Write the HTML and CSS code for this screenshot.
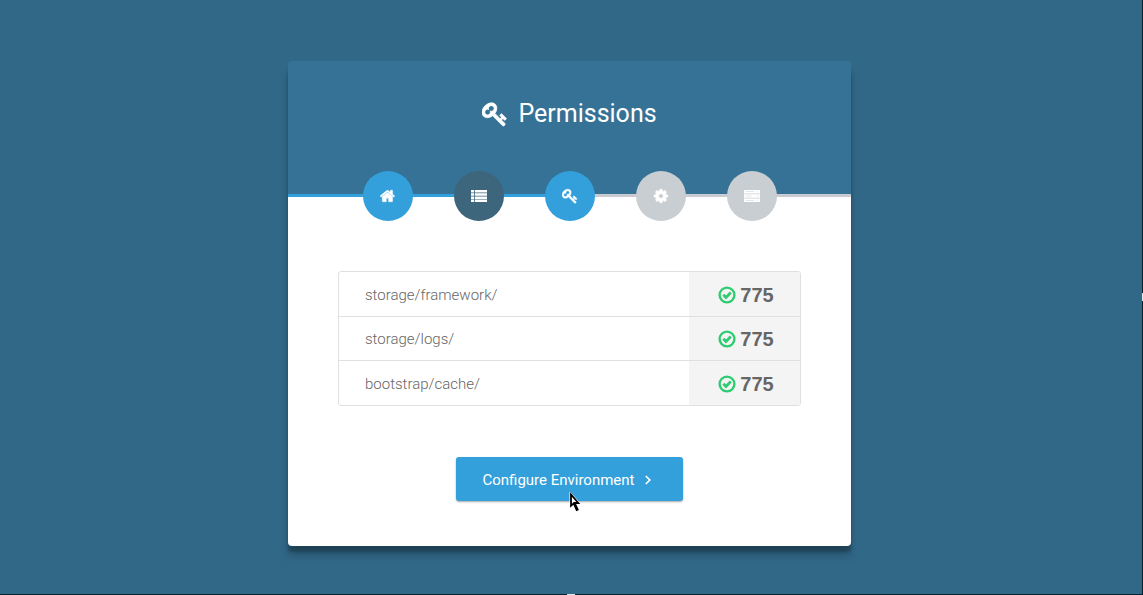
FILE: index.html
```html
<!DOCTYPE html>
<html lang="en">
<head>
<meta charset="utf-8">
<meta name="viewport" content="width=device-width, initial-scale=1">
<title>Permissions</title>
<link rel="stylesheet" href="styles.css">
</head>
<body>
<svg class="sprite" aria-hidden="true">
  <symbol id="key" viewBox="0 0 1792 1792"><path stroke="currentColor" stroke-width="50" d="M832 512q0-80-56-136t-136-56-136 56-56 136q0 42 19 83-41-19-83-19-80 0-136 56t-56 136 56 136 136 56 136-56 56-136q0-42-19-83 41 19 83 19 80 0 136-56t56-136zm851 704q0 17-49 66t-66 49q-9 0-28.5-16t-36.5-33-38.5-40-24.5-26l-96 96 220 220q28 28 28 68 0 42-39 81t-81 39q-40 0-68-28l-671-671q-176 131-365 131-163 0-265.5-102.5t-102.5-265.5q0-160 95-313t248-248 313-95q163 0 265.5 102.5t102.5 265.5q0 189-131 365l355 355 96-96q-3-3-26-24.5t-40-38.5-33-36.5-16-28.5q0-17 49-66t66-49q13 0 23 10 6 6 46 44.5t82 79.5 86.5 86 73 78 28.5 41z"/></symbol>
  <symbol id="check" viewBox="0 0 18 18"><circle cx="9" cy="9" r="7.4" fill="none" stroke="currentColor" stroke-width="2.4"/><path d="M5.3 8.7l2.7 2.7 4.8-4.8" fill="none" stroke="currentColor" stroke-width="2.8"/></symbol>
</svg>
<main class="master">
  <section class="box">
    <header class="header">
      <h1 class="title"><svg class="title-icon" aria-hidden="true"><use href="#key"/></svg>Permissions</h1>
    </header>
    <nav aria-label="Installation steps">
      <ol class="steps">
        <li><a class="step" href="#welcome" aria-label="Welcome"><svg class="step-icon" viewBox="0 0 1792 1792"><path stroke="currentColor" stroke-width="50" d="M1408 992v480q0 26-19 45t-45 19h-384v-384h-256v384h-384q-26 0-45-19t-19-45v-480q0-1 .5-3t.5-3l575-474 575 474q1 2 1 6zm223-69l-62 74q-8 9-21 11h-3q-13 0-21-7l-692-577-692 577q-12 8-24 7-13-2-21-11l-62-74q-8-10-7-23.500t11-21.500l719-599q32-26 76-26t76 26l244 204v-195q0-14 9-23t23-9h192q14 0 23 9t9 23v408l219 182q10 8 11 21.500t-7 23.500z"/></svg></a></li>
        <li><a class="step step-visited" href="#requirements" aria-label="Requirements"><svg class="step-icon" viewBox="0 0 16 16"><path d="M0 2h3v2.500H0zM3.800 2H16v2.500H3.800zM0 5.200h3v2.500H0zM3.800 5.200H16v2.500H3.800zM0 8.400h3v2.500H0zM3.800 8.400H16v2.500H3.800zM0 11.600h3V14H0zM3.800 11.600H16V14H3.800z"/></svg></a></li>
        <li><a class="step" href="#permissions" aria-label="Permissions" aria-current="step"><svg class="step-icon"><use href="#key"/></svg></a></li>
        <li><a class="step step-pending" href="#environment" aria-label="Environment"><svg class="step-icon" viewBox="0 0 1792 1792"><path stroke="currentColor" stroke-width="50" d="M1152 896q0-106-75-181t-181-75-181 75-75 181 75 181 181 75 181-75 75-181zm512-109v222q0 12-8 23t-20 13l-185 28q-19 54-39 91 35 50 107 138 10 12 10 25t-9 23q-27 37-99 108t-94 71q-12 0-26-9l-138-108q-44 23-91 38-16 136-29 186-7 28-36 28h-222q-14 0-24.500-8.500t-11.500-21.500l-28-184q-49-16-90-37l-141 107q-10 9-25 9-14 0-25-11-126-114-165-168-7-10-7-23 0-12 8-23 15-21 51-66.500t54-70.500q-27-50-41-99l-183-27q-13-2-21-12.500t-8-23.500v-222q0-12 8-23t19-13l186-28q14-46 39-92-40-57-107-138-10-12-10-24 0-10 9-23 26-36 98.500-107.500t94.500-71.500q13 0 26 10l138 107q44-23 91-38 16-136 29-186 7-28 36-28h222q14 0 24.500 8.500t11.500 21.500l28 184q49 16 90 37l142-107q9-9 24-9 13 0 25 10 129 119 165 170 7 8 7 22 0 12-8 23-15 21-51 66.500t-54 70.500q26 50 41 98l183 28q13 2 21 12.500t8 23.500z"/></svg></a></li>
        <li><a class="step step-pending" href="#finish" aria-label="Finish"><svg class="step-icon" viewBox="0 0 16 16"><path fill-rule="evenodd" d="M0 2h16v3.600H0zM0 6.200h16v3.600H0zM0 10.400h16V14H0zM1.500 3.500v.6h9v-.6zM1.500 7.700v.6h6v-.6zM1.500 11.900v.6h9v-.6zM13 3.400v.8h.8v-.8zM13 7.600v.8h.8v-.8zM13 11.800v.8h.8v-.8z"/></svg></a></li>
      </ol>
    </nav>
    <div class="main">
      <table class="list">
        <tbody>
          <tr><th scope="row">storage/framework/</th><td><span class="status"><svg class="status-icon" aria-hidden="true"><use href="#check"/></svg>775</span></td></tr>
          <tr><th scope="row">storage/logs/</th><td><span class="status"><svg class="status-icon" aria-hidden="true"><use href="#check"/></svg>775</span></td></tr>
          <tr><th scope="row">bootstrap/cache/</th><td><span class="status"><svg class="status-icon" aria-hidden="true"><use href="#check"/></svg>775</span></td></tr>
        </tbody>
      </table>
      <a class="button" href="#environment">Configure Environment<svg class="chevron" viewBox="0 0 8 10" aria-hidden="true"><path d="M1.800 1l4 4-4 4" fill="none" stroke="currentColor" stroke-width="1.700"/></svg><svg class="pointer" viewBox="0 0 12 22" aria-hidden="true"><path d="M1 1v16.500l3.300-3 2.700 6 3-1.300-2.500-5.700H12z" fill="#fff" stroke="#fff"/><path d="M2 3.500v11.300l2.700-2.500 3 6.800 1-.5-3-6.600h3.600z" fill="#fff" stroke="#000" stroke-width="1.800"/></svg></a>
    </div>
  </section>
</main>
</body>
</html>
```
FILE: styles.css
```css
* { box-sizing: border-box; }

body {
  margin: 0;
  background: #316888;
  color: #666;
  font-family: Roboto, "Liberation Sans", sans-serif;
  font-weight: 300;
}

.sprite { display: none; }
svg { fill: currentColor; }

.master {
  position: relative;
  display: flex;
  justify-content: center;
  align-items: center;
  min-height: 100vh;
  padding: 12px 3px 0 0;
  border-right: 1px solid #062231;
  border-bottom: 1px solid #062231;
}

/* Resize handles on the window edges */
.master::before,
.master::after {
  content: "";
  position: absolute;
  background: #dce6eb;
}
.master::before { right: -1px; top: 50%; width: 1px; height: 8px; margin-top: -4px; }
.master::after { bottom: -1px; left: 50%; width: 8px; height: 1px; margin-left: -4px; }

.box {
  width: 100%;
  max-width: 563px;
  border-radius: 8px 8px 4px 4px;
  background: #fff;
  box-shadow: 0 10px 10px rgba(0, 0, 0, .19), 0 6px 3px rgba(0, 0, 0, .23);
}

.header {
  padding: 37px 30px 64px;
  border-radius: 4px 4px 0 0;
  background: #357295;
}

.title {
  display: flex;
  justify-content: center;
  align-items: center;
  gap: 10px;
  margin: 0;
  color: #fff;
  font-size: 25px;
  font-weight: 400;
  line-height: 32px;
}
.title-icon { width: 26px; height: 26px; }

.steps {
  position: relative;
  display: flex;
  justify-content: center;
  gap: 41px;
  margin: -23px 0 0;
  padding: 0;
  list-style: none;
  background: linear-gradient(to right, #34a0db 50%, #cacbd2 50%) 0 23px / 100% 3px no-repeat;
}

.step {
  display: flex;
  justify-content: center;
  align-items: center;
  width: 50px;
  height: 50px;
  border-radius: 50%;
  background: #34a0db;
  color: #fff;
}
.step-visited { background: #3d657b; }
.step-pending { background: #c9ced3; }
.step-icon { width: 16px; height: 16px; }

.main {
  display: flex;
  flex-direction: column;
  align-items: center;
  gap: 51px;
  padding: 50px 50px 45px;
}

.list {
  width: 100%;
  border: 1px solid #e0e0e0;
  border-radius: 3px;
  border-spacing: 0;
}
.list th,
.list td {
  height: 44px;
  padding: 2px 0 0;
  border-bottom: 1px solid #e0e0e0;
}
.list tr:first-child > * { height: 45px; }
.list tr:last-child > * { border-bottom: 0; }
.list th {
  padding-left: 26px;
  font-size: 15px;
  font-weight: 300;
  text-align: left;
}
.list td {
  width: 111px;
  background: #f4f4f4;
}

.status {
  display: flex;
  justify-content: center;
  align-items: center;
  gap: 4px;
  padding-left: 3px;
  font: bold 20px/24px "Liberation Sans", Arial, sans-serif;
}
.status-icon { width: 18px; height: 18px; color: #2ecc71; }

.button {
  position: relative;
  display: flex;
  align-items: center;
  gap: 9px;
  padding: 13px 31px 11px 26px;
  border-radius: 3px;
  background: #34a0db;
  box-shadow: 0 1px 2px rgba(0, 0, 0, .35);
  color: #fff;
  font-size: 15px;
  font-weight: 400;
  line-height: 20px;
  text-decoration: none;
}
.chevron { width: 8px; height: 10px; }

.pointer {
  position: absolute;
  left: 113px;
  top: 34px;
  width: 12px;
  height: 22px;
}
```
